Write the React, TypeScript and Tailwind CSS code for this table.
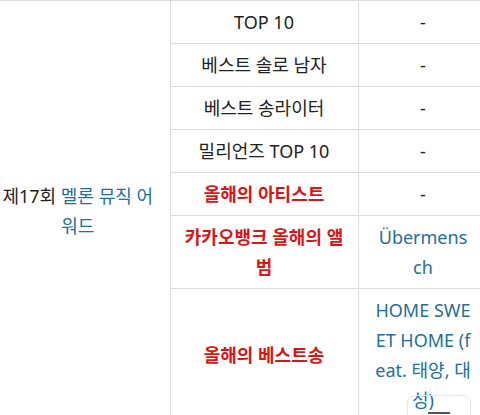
import React from 'react';

type Row = {
  award: string;
  winner: string[];
  highlight?: boolean;
  link?: boolean;
};

// winner text is stored in the chunks it wraps into on the narrow column
const rows: Row[] = [
  { award: 'TOP 10', winner: ['-'] },
  { award: '베스트 솔로 남자', winner: ['-'] },
  { award: '베스트 송라이터', winner: ['-'] },
  { award: '밀리언즈 TOP 10', winner: ['-'] },
  { award: '올해의 아티스트', winner: ['-'], highlight: true },
  { award: '카카오뱅크 올해의 앨범', winner: ['Übermens', 'ch'], highlight: true, link: true },
  { award: '올해의 베스트송', winner: ['HOME SWE', 'ET HOME (f', 'eat. 태양, 대', '성)'], highlight: true, link: true },
];

const cell = 'border border-[#dcdcdc] py-[6px] text-center align-middle leading-[30px]';

export default function App() {
  return (
    <div className="relative h-[415px] w-[480px] overflow-hidden bg-white text-[18px] text-[#222]" style={{ fontFamily: '"Noto Sans", "Noto Sans CJK KR", sans-serif' }}>
      <table className="w-[488px] table-fixed border-collapse border-t border-[#dcdcdc]">
        <colgroup>
          <col className="w-[170px]" />
          <col className="w-[188px]" />
          <col className="w-[130px]" />
        </colgroup>
        <tbody>
          {rows.map((r, i) => (
            <tr key={r.award}>
              {i === 0 && (
                <td rowSpan={rows.length} className="border-r border-t border-[#dcdcdc] pl-0 pr-[14px] text-center align-middle leading-[30px]">
                  제17회 <span className="text-[#22709a]">멜론 뮤직 어워드</span>
                </td>
              )}
              <td className={`${cell} px-[11px] ${r.highlight ? 'font-bold text-[#dc1414]' : ''}`}>{r.award}</td>
              <td className={`${cell} px-[12px] ${r.link ? 'text-[#22709a]' : ''}`}>
                {r.winner.map((w) => (
                  <div key={w} className="whitespace-nowrap">{w}</div>
                ))}
              </td>
            </tr>
          ))}
        </tbody>
      </table>
      {/* floating overlay button peeking in at the bottom */}
      <div className="absolute left-[407px] top-[395px] h-[40px] w-[64px] rounded-[8px] border border-[#e6e6e6]">
        <div className="mx-auto mt-[16px] h-[2px] w-[22px] bg-[#555]" />
      </div>
    </div>
  );
}
